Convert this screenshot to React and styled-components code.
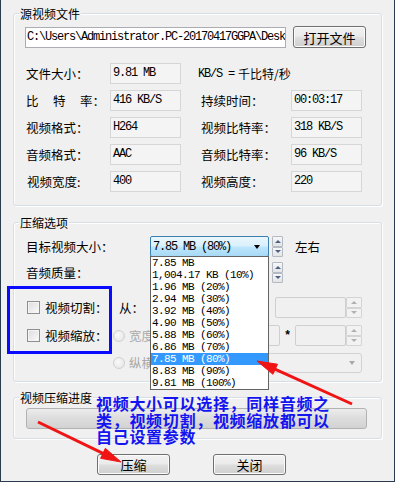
import React from 'react';
import styled, { createGlobalStyle } from 'styled-components';

const MONO = '"Liberation Mono", "DejaVu Sans Mono", monospace';
const CJK = '"Noto Sans CJK SC", "Noto Sans", sans-serif';

const GlobalStyle = createGlobalStyle`
    html, body {
        margin: 0;
        padding: 0;
        background: #f0f0f0;
    }
`;

const Window = styled.div`
    position: relative;
    width: 395px;
    height: 482px;
    box-sizing: border-box;
    padding: 13px 0 0 13px;
    background: #f0f0f0;
    box-shadow: inset 1px 0 0 #2b3b4e, inset -1px 0 0 #2b3b4e, inset 0 -1px 0 #2b3b4e;
    font-family: ${CJK};
    font-size: 12px;
    color: #000;
    overflow: hidden;
`;

const Group = styled.div`
    width: 369px;
    box-sizing: border-box;
    margin-top: ${p => p.$mt || 0}px;
    padding: 0 14px ${p => p.$pb}px 11px;
    border: 1px solid #d5dfe5;
    border-radius: 3px;
    box-shadow: inset 1px 1px 0 #fff, 1px 1px 0 #fff;
`;

const Legend = styled.div`
    width: fit-content;
    height: 16px;
    margin: -8px 0 0 -6px;
    padding: 0 1px;
    line-height: 16px;
    background: #f0f0f0;
`;

const PathRow = styled.div`
    display: flex;
    align-items: center;
    height: 22px;
    margin-top: 4px;
`;

const PathInput = styled.div`
    width: 261px;
    height: 21px;
    box-sizing: border-box;
    padding-left: 1px;
    border: 1px solid #abadb3;
    background: #fff;
    font-family: ${MONO};
    font-size: 12px;
    letter-spacing: -1.2px;
    line-height: 19px;
    white-space: nowrap;
    overflow: hidden;
`;

const Button = styled.div`
    width: 73px;
    height: ${p => p.$h || 22}px;
    box-sizing: border-box;
    margin-left: ${p => p.$ml || 0}px;
    display: flex;
    align-items: center;
    justify-content: center;
    border: 1px solid #707070;
    border-radius: 3px;
    background: linear-gradient(#f2f2f2 0%, #ebebeb 45%, #dddddd 55%, #cfcfcf 100%);
    box-shadow: inset 0 0 0 1px #fbfbfb;
    font-size: 13px;
`;

const InfoGrid = styled.div`
    display: grid;
    grid-template-columns: 85px 71px 110px 71px;
    grid-auto-rows: 21px;
    row-gap: 6px;
    margin-top: 15px;
`;

const FieldLabel = styled.div`
    display: flex;
    align-items: center;
    padding-left: ${p => p.$pl || 1}px;
    font-size: 12.5px;
    white-space: nowrap;
`;

const Spaced = styled.span`
    letter-spacing: 14.5px;
`;

const ValueBox = styled.div`
    box-sizing: border-box;
    padding-left: 2px;
    border: 1px solid #d6d6d6;
    background: #f4f4f4;
    font-family: ${MONO};
    font-size: 12px;
    letter-spacing: -1.2px;
    line-height: 19px;
`;

const Note = styled.div`
    grid-column: span 2;
    display: flex;
    align-items: center;
    padding-left: 17px;
    white-space: nowrap;
`;

const MonoText = styled.span`
    font-family: ${MONO};
    font-size: 12px;
    letter-spacing: -1.2px;
    margin-right: 4px;
`;

const OptRow = styled.div`
    display: flex;
    align-items: center;
    height: 21px;
    margin-top: ${p => p.$mt}px;
`;

const OptLabel = styled.div`
    width: ${p => p.$w}px;
    flex: none;
    padding-left: 1px;
    box-sizing: border-box;
    font-size: 12.5px;
    white-space: nowrap;
`;

const ComboWrap = styled.div`
    position: relative;
    width: 119px;
    height: 21px;
    flex: none;
`;

const Combo = styled.div`
    height: 21px;
    box-sizing: border-box;
    display: flex;
    align-items: center;
    justify-content: space-between;
    padding: 0 8px 0 2px;
    border: 1px solid ${p => (p.$focus ? '#3c7fb1' : '#acacac')};
    border-radius: 2px;
    background: ${p =>
        p.$focus
            ? 'linear-gradient(#eaf6fd 0%, #d9f0fc 48%, #bee6fd 52%, #a7d9f5 100%)'
            : 'linear-gradient(#f2f2f2, #e5e5e5)'};
    font-family: ${MONO};
    font-size: 12px;
    letter-spacing: -1.2px;

    &::after {
        content: '';
        border-left: 3.5px solid transparent;
        border-right: 3.5px solid transparent;
        border-top: 4px solid #000;
    }
`;

const DropList = styled.div`
    position: absolute;
    top: 20px;
    left: 0;
    z-index: 2;
    width: 119px;
    box-sizing: border-box;
    border: 1px solid #646464;
    background: #fff;
`;

const DropItem = styled.div`
    height: 12px;
    line-height: 12px;
    padding-left: 1px;
    font-family: ${MONO};
    font-size: 11px;
    letter-spacing: -0.6px;
    white-space: nowrap;
    overflow: hidden;
    background: ${p => (p.$sel ? '#3399ff' : 'transparent')};
    color: ${p => (p.$sel ? '#fff' : '#000')};
`;

const Spin = styled.div`
    width: ${p => p.$w}px;
    height: ${p => p.$h || 21}px;
    margin-left: ${p => p.$ml || 0}px;
    flex: none;
    display: flex;
    flex-direction: column;
`;

const SpinBtn = styled.div`
    flex: 1;
    display: flex;
    align-items: center;
    justify-content: center;
    border: 1px solid ${p => (p.$off ? '#d4d4d4' : '#b3bac4')};
    border-radius: 1px;
    background: ${p => (p.$off ? '#f2f2f2' : 'linear-gradient(#f7f7f7, #e4e4e4)')};

    &::after {
        content: '';
        border-left: 3px solid transparent;
        border-right: 3px solid transparent;
        ${p => (p.$down ? 'border-top' : 'border-bottom')}: 3px solid ${p => (p.$off ? '#b0b0b0' : '#4d5f85')};
    }
`;

const SideText = styled.div`
    margin-left: 12px;
    font-size: 12.5px;
`;

const CheckField = styled.div`
    width: ${p => p.$w}px;
    flex: none;
    display: flex;
    align-items: center;
`;

const CheckBox = styled.div`
    width: 13px;
    height: 13px;
    box-sizing: border-box;
    margin-left: 2px;
    border: 1px solid #8e8f8f;
    background: linear-gradient(135deg, #dcdcdc, #fbfbfb);
    box-shadow: inset 0 0 0 1px #f4f4f4;
`;

const CheckText = styled.span`
    margin-left: 5px;
    font-size: 12.5px;
`;

const RadioField = styled.div`
    width: 116px;
    flex: none;
    display: flex;
    align-items: center;
    overflow: hidden;
`;

const Radio = styled.div`
    width: 12px;
    height: 12px;
    box-sizing: border-box;
    border-radius: 50%;
    border: 1px solid #d0d0d0;
    background: radial-gradient(circle at 40% 40%, #fafafa, #e2e2e2);
`;

const DimText = styled.span`
    margin-left: 4px;
    color: #a9a9a9;
    font-size: 12.5px;
    white-space: nowrap;
`;

const Field = styled.div`
    width: ${p => p.$w}px;
    height: 21px;
    flex: none;
    box-sizing: border-box;
    border: 1px solid #cfcfcf;
    border-radius: 2px;
    background: #f0f0f0;
`;

const Star = styled.div`
    width: 15px;
    flex: none;
    text-align: center;
    font-family: ${MONO};
    font-size: 12px;
    font-weight: bold;
`;

const DimSelect = styled.div`
    width: 133px;
    height: 20px;
    flex: none;
    box-sizing: border-box;
    display: flex;
    align-items: center;
    justify-content: flex-end;
    padding-right: 6px;
    border: 1px solid #d2d2d2;
    border-radius: 3px;
    background: #f0f0f0;

    &::after {
        content: '';
        border-left: 3.5px solid transparent;
        border-right: 3.5px solid transparent;
        border-top: 4px solid #a8a8a8;
    }
`;

const ProgressBar = styled.div`
    width: 341px;
    height: 21px;
    box-sizing: border-box;
    margin: 2px 0 0 1px;
    border: 1px solid #b2b2b2;
    border-radius: 3px;
    background: linear-gradient(#ececec 0%, #dedede 45%, #d2d2d2 100%);
`;

const ButtonRow = styled.div`
    display: flex;
    gap: 43px;
    margin: 15px 0 0 84px;
`;

const Highlight = styled.div`
    position: absolute;
    left: 7px;
    top: 286px;
    width: 105px;
    height: 68px;
    box-sizing: border-box;
    border: 3px solid #0a0aff;
    z-index: 3;
`;

const Callout = styled.div`
    position: absolute;
    left: 96px;
    top: 395px;
    z-index: 4;
    color: #1414f0;
    font-family: ${CJK};
    font-size: 16px;
    font-weight: 700;
    letter-spacing: 0.7px;
    line-height: 16.5px;
    white-space: nowrap;
`;

const ArrowLayer = styled.svg`
    position: absolute;
    left: 0;
    top: 0;
    z-index: 5;
    pointer-events: none;
`;

const sizes = [
    '7.85 MB',
    '1,004.17 KB (10%)',
    '1.96 MB (20%)',
    '2.94 MB (30%)',
    '3.92 MB (40%)',
    '4.90 MB (50%)',
    '5.88 MB (60%)',
    '6.86 MB (70%)',
    '7.85 MB (80%)',
    '8.83 MB (90%)',
    '9.81 MB (100%)',
];

function Spinner({ w, ml, off }) {
    return (
        <Spin $w={w} $ml={ml}>
            <SpinBtn $off={off} />
            <SpinBtn $off={off} $down />
        </Spin>
    );
}

function Arrow({ x1, y1, x2, y2 }) {
    const dx = x2 - x1;
    const dy = y2 - y1;
    const len = Math.hypot(dx, dy);
    const ux = dx / len;
    const uy = dy / len;
    const bx = x2 - ux * 20;
    const by = y2 - uy * 20;
    const head = `${x2},${y2} ${bx - uy * 5.5},${by + ux * 5.5} ${bx + uy * 5.5},${by - ux * 5.5}`;
    return (
        <g fill="#f01414" stroke="#f01414">
            <line x1={x1} y1={y1} x2={bx + ux * 4} y2={by + uy * 4} strokeWidth="3" />
            <polygon points={head} strokeWidth="1" />
        </g>
    );
}

export default function App() {
    return (
        <Window>
            <GlobalStyle />

            <Group $pb={13}>
                <Legend>源视频文件</Legend>
                <PathRow>
                    <PathInput>C:\Users\Administrator.PC-20170417GGPA\Desk</PathInput>
                    <Button $ml={7}>打开文件</Button>
                </PathRow>

                <InfoGrid>
                    <FieldLabel>文件大小：</FieldLabel>
                    <ValueBox>9.81 MB</ValueBox>
                    <Note>
                        <MonoText>KB/S =</MonoText>千比特/秒
                    </Note>

                    <FieldLabel><Spaced>比特</Spaced>率：</FieldLabel>
                    <ValueBox>416 KB/S</ValueBox>
                    <FieldLabel $pl={20}>持续时间：</FieldLabel>
                    <ValueBox>00:03:17</ValueBox>

                    <FieldLabel>视频格式：</FieldLabel>
                    <ValueBox>H264</ValueBox>
                    <FieldLabel $pl={20}>视频比特率：</FieldLabel>
                    <ValueBox>318 KB/S</ValueBox>

                    <FieldLabel>音频格式：</FieldLabel>
                    <ValueBox>AAC</ValueBox>
                    <FieldLabel $pl={20}>音频比特率：</FieldLabel>
                    <ValueBox>96 KB/S</ValueBox>

                    <FieldLabel $pl={2}>视频宽度:</FieldLabel>
                    <ValueBox>400</ValueBox>
                    <FieldLabel $pl={20}>视频高度：</FieldLabel>
                    <ValueBox>220</ValueBox>
                </InfoGrid>
            </Group>

            <Group $mt={16} $pb={8}>
                <Legend>压缩选项</Legend>

                <OptRow $mt={5}>
                    <OptLabel $w={125}>目标视频大小：</OptLabel>
                    <ComboWrap>
                        <Combo $focus>7.85 MB (80%)</Combo>
                        <DropList>
                            {sizes.map((s, i) => (
                                <DropItem key={i} $sel={i === 8}>{s}</DropItem>
                            ))}
                        </DropList>
                    </ComboWrap>
                    <Spinner w={11} ml={3} />
                    <SideText>左右</SideText>
                </OptRow>

                <OptRow $mt={5}>
                    <OptLabel $w={125}>音频质量：</OptLabel>
                    <ComboWrap>
                        <Combo />
                    </ComboWrap>
                    <Spinner w={11} ml={3} />
                </OptRow>

                <OptRow $mt={14}>
                    <CheckField $w={93}>
                        <CheckBox />
                        <CheckText>视频切割：</CheckText>
                    </CheckField>
                    <OptLabel $w={32}>从：</OptLabel>
                    <Field $w={70} />
                    <Spinner w={16} off />
                    <OptLabel $w={39} />
                    <Field $w={71} />
                    <Spinner w={16} off />
                </OptRow>

                <OptRow $mt={7}>
                    <CheckField $w={88}>
                        <CheckBox />
                        <CheckText>视频缩放：</CheckText>
                    </CheckField>
                    <RadioField>
                        <Radio />
                        <DimText>宽度</DimText>
                    </RadioField>
                    <Field $w={51} />
                    <Star>*</Star>
                    <Field $w={51} />
                    <Spinner w={16} off />
                </OptRow>

                <OptRow $mt={6}>
                    <CheckField $w={88} />
                    <RadioField>
                        <Radio />
                        <DimText>纵横</DimText>
                    </RadioField>
                    <DimSelect />
                </OptRow>
            </Group>

            <Group $mt={15} $pb={9}>
                <Legend>视频压缩进度</Legend>
                <ProgressBar />
            </Group>

            <ButtonRow>
                <Button $h={21}>压缩</Button>
                <Button $h={21}>关闭</Button>
            </ButtonRow>

            <Highlight />

            <Callout>
                <div>视频大小可以选择，同样音频之</div>
                <div>类，视频切割，视频缩放都可以</div>
                <div>自己设置参数</div>
            </Callout>

            <ArrowLayer width="395" height="482" viewBox="0 0 395 482">
                <Arrow x1={352} y1={404} x2={257} y2={361} />
                <Arrow x1={38} y1={422} x2={121} y2={462} />
            </ArrowLayer>
        </Window>
    );
}
